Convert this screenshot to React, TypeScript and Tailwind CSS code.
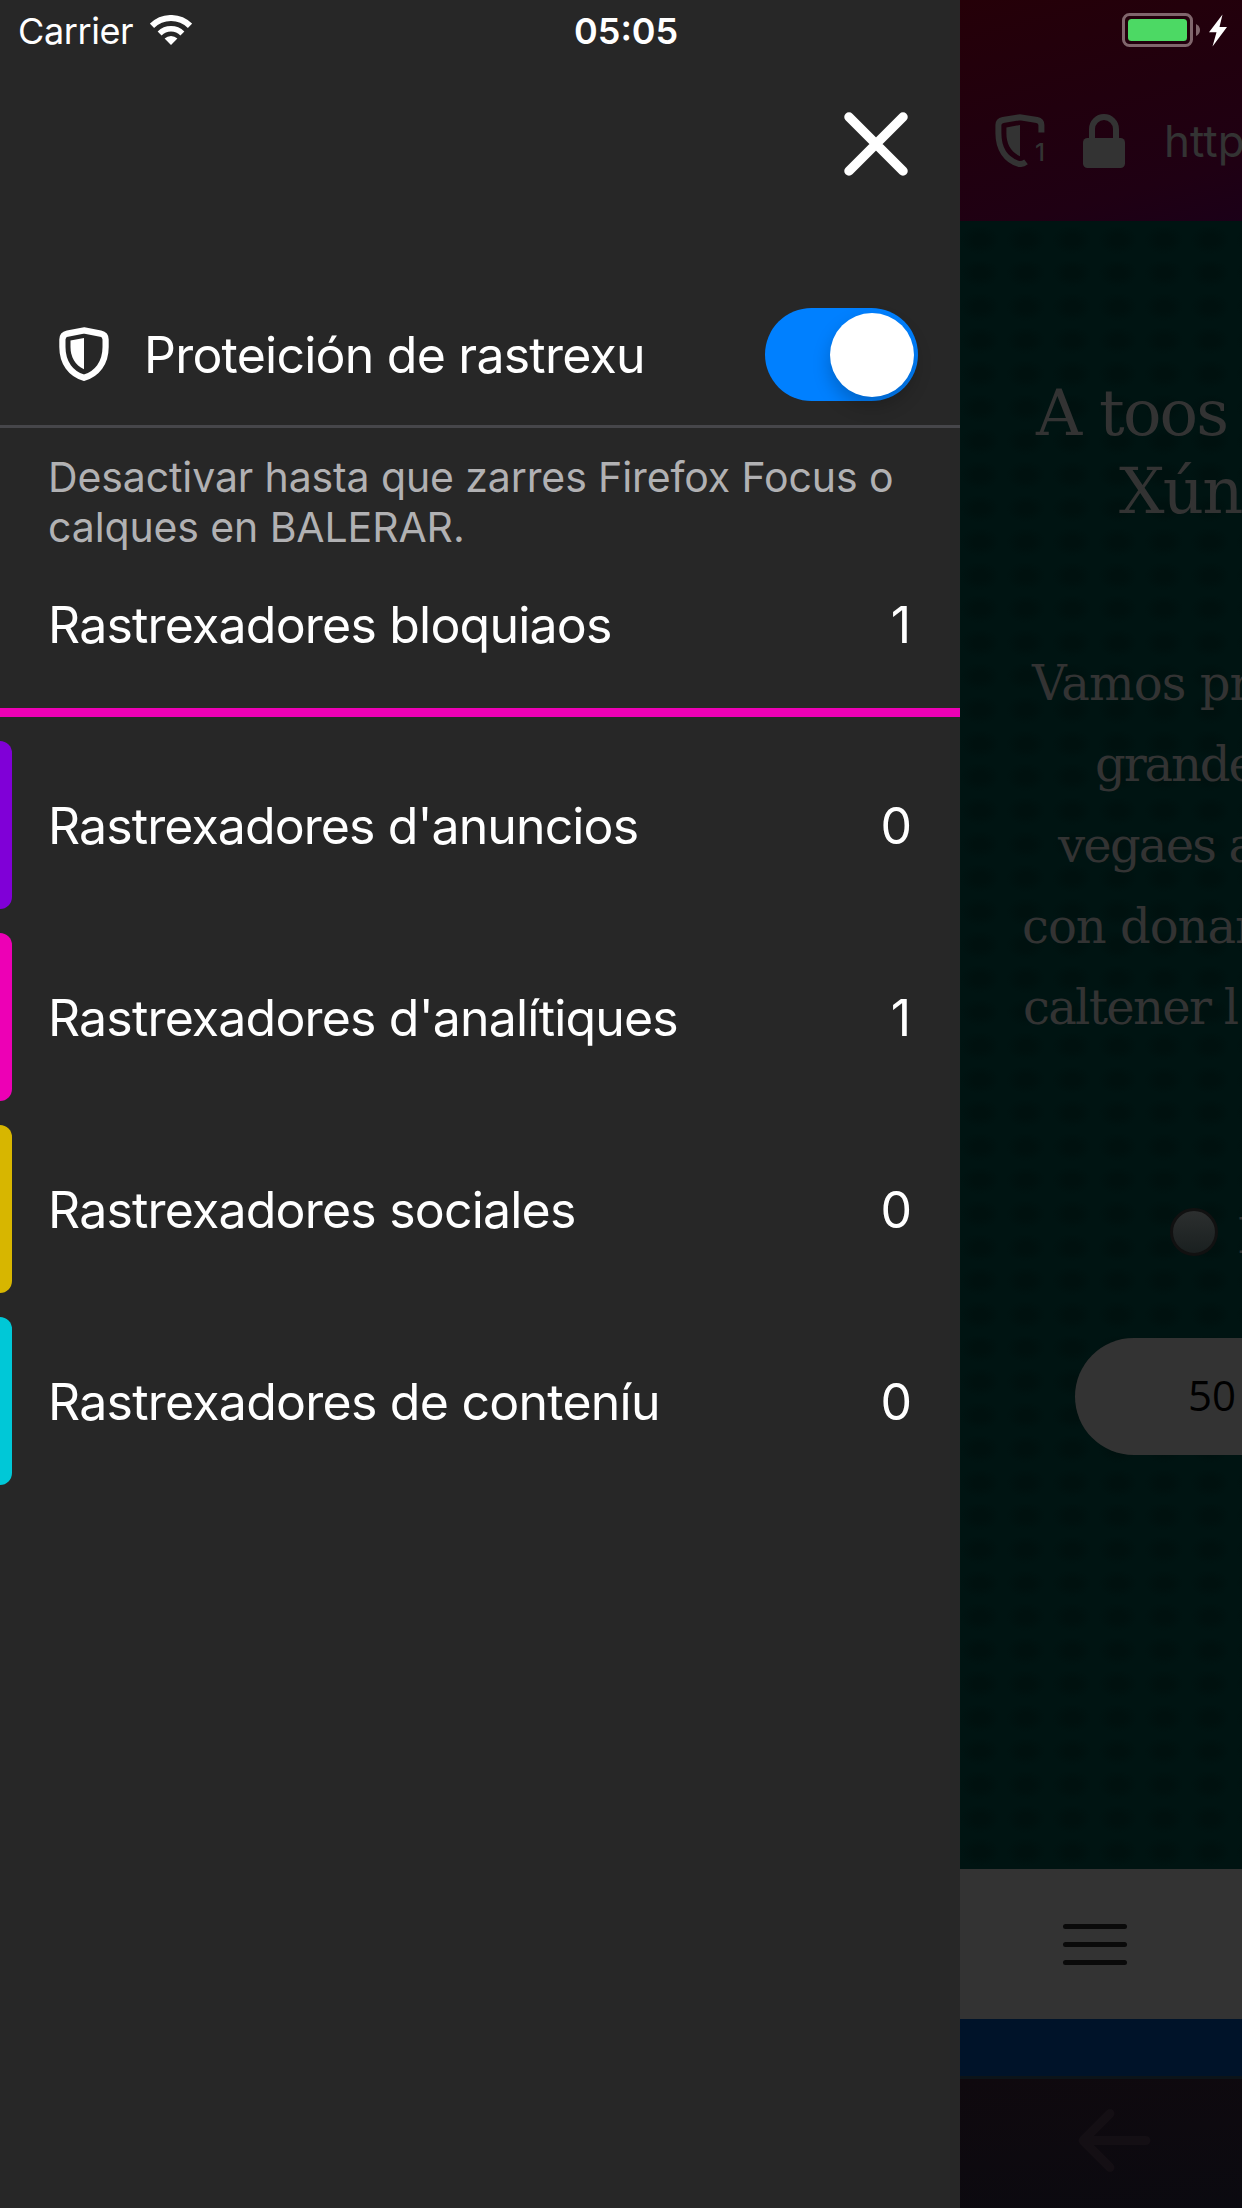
const trackers = [
  { label: "Rastrexadores d'anuncios", count: 0, bar: "bg-[#8000d7]", text: "tracking-[-0.9px]" },
  { label: "Rastrexadores d'analítiques", count: 1, bar: "bg-[#ed00b5]", text: "tracking-[-0.82px]" },
  { label: "Rastrexadores sociales", count: 0, bar: "bg-[#d7b600]", text: "tracking-[-0.8px]" },
  { label: "Rastrexadores de conteníu", count: 0, bar: "bg-[#00c8d7]", text: "tracking-[-0.75px]" },
];

function WifiIcon() {
  return (
    <svg width="42" height="30" viewBox="0 0 42 30" fill="none" stroke="#fff" className="block">
      <path d="M2 10.8 A27 27 0 0 1 40 10.8" strokeWidth="6" />
      <path d="M9.6 18.4 A16.3 16.3 0 0 1 32.4 18.4" strokeWidth="5.6" />
      <path d="M21 30 L14.6 23.6 A9.2 9.2 0 0 1 27.4 23.6 Z" fill="#fff" stroke="none" />
    </svg>
  );
}

function ShieldIcon() {
  return (
    <svg width="50" height="54" viewBox="0 0 50 54" className="block">
      <path
        d="M25 3.4 L41.5 6.6 Q46.6 7.8 46.6 12.5 V20 C46.6 36 38 47 25 50.8 C12 47 3.4 36 3.4 20 V12.5 Q3.4 7.8 8.5 6.6 Z"
        fill="none"
        stroke="#fff"
        strokeWidth="6.2"
      />
      <path d="M25 11 L11.5 13.6 V20 C11.5 30 16 38 25 42.3 Z" fill="#fff" />
    </svg>
  );
}

function ShieldCountIcon() {
  return (
    <div className="relative h-[53px] w-[50px] text-[#333]">
      <svg width="50" height="53" viewBox="0 0 50 53" className="block">
        <path
          d="M46.4 18.4 V11 Q46.4 7 42 6 L25 3.2 L8 6 Q3.4 7 3.4 11 V19 C3.4 35 11 46 24 50 Q27.6 50.4 31 47.8"
          fill="none"
          stroke="currentColor"
          strokeWidth="6"
        />
        <path d="M25 11 L11.4 13.4 V19 C11.4 30 15.6 37.8 25 42.2 Z" fill="currentColor" />
      </svg>
      <span className="absolute left-[40px] top-[25px] text-[24px] font-medium leading-[28px]">1</span>
    </div>
  );
}

function LockIcon() {
  return (
    <svg width="42" height="54" viewBox="0 0 42 54" className="block">
      <path d="M9 26 V15 A12 12 0 0 1 33 15 V26" fill="none" stroke="#333" strokeWidth="6" />
      <rect x="0" y="24" width="42" height="30" rx="4.5" fill="#333" />
    </svg>
  );
}

function Battery() {
  return (
    <svg width="106" height="34" viewBox="0 0 106 34" className="block">
      <rect x="1.5" y="1.5" width="68" height="31" rx="6" fill="none" stroke="#80666c" strokeWidth="3" />
      <rect x="6" y="6" width="59" height="22" rx="3.5" fill="#4cd964" />
      <path d="M74 11 Q78 13 78 17 Q78 21 74 23 Z" fill="#80666c" />
      <path d="M100.5 1.5 L87 19.2 H94.5 L90.5 33.5 L105 14 H97.5 Z" fill="#fff" />
    </svg>
  );
}

function Panel() {
  return (
    <aside className="flex h-full w-[960px] shrink-0 flex-col bg-[#272727] text-white">
      <div className="flex h-[62px] items-center pl-[18px] text-[36px] leading-[62px]">
        <span className="w-[132px] tracking-[-0.4px]">Carrier</span>
        <div className="-mt-0.5">
          <WifiIcon />
        </div>
        <span className="ml-[382px] font-semibold">05:05</span>
      </div>

      <div className="flex h-[222px] justify-end pr-[52px] pt-[50px]">
        <svg width="64" height="64" viewBox="0 0 64 64" className="block">
          <path d="M5 5 L59 59 M59 5 L5 59" stroke="#fff" strokeWidth="9.5" strokeLinecap="round" />
        </svg>
      </div>

      <div className="flex h-[144px] shrink-0 items-center border-b-[3px] border-[#46464a] pl-[59px] pr-[42px]">
        <div className="-mt-px">
          <ShieldIcon />
        </div>
        <span className="ml-[35px] flex-1 pt-[1px] text-[50px] leading-[60px] tracking-[-0.77px]">
          Proteición de rastrexu
        </span>
        <div className="flex h-[93px] w-[153px] items-center justify-end rounded-full bg-[#0080ff] pr-[4.5px]">
          <div className="size-[84px] rounded-full bg-white shadow-[0_9px_18px_rgba(0,0,0,0.22)]" />
        </div>
      </div>

      <p className="pl-[48px] pt-[24px] text-[41px] leading-[50px] tracking-[-0.11px] text-[#b1b1b3]">
        Desactivar hasta que zarres Firefox Focus o
        <br />
        calques en BALERAR.
      </p>

      <div className="flex h-[165px] items-center justify-between border-b-[9px] border-[#ed00b5] pb-[10px] pl-[48px] pr-[49px] text-[50px]">
        <span className="tracking-[-0.79px]">Rastrexadores bloquiaos</span>
        <span>1</span>
      </div>

      <div className="flex flex-col gap-6 pt-6">
        {trackers.map((t) => (
          <div key={t.label} className="flex h-[168px] items-center pr-[47px] text-[50px] leading-[60px]">
            <div className={`h-full w-3 rounded-r-[12px] ${t.bar}`} />
            <span className={`ml-9 flex-1 pt-[2px] ${t.text}`}>{t.label}</span>
            <span className={t.count === 1 ? "pr-[2px] pt-[2px]" : "pr-px pt-[2px]"}>{t.count}</span>
          </div>
        ))}
      </div>
    </aside>
  );
}

function Page() {
  return (
    <main className="flex h-full w-[282px] flex-col overflow-hidden whitespace-nowrap">
      <header className="flex h-[221px] shrink-0 flex-col bg-linear-[165deg,#250008_0%,#21000e_45%,#1f0013_80%,#1b0018_100%]">
        <div className="pl-[162px] pt-[13px]">
          <Battery />
        </div>
        <div className="mt-[14px] flex h-[159px] items-center pl-[35px]">
          <div className="-mt-px">
            <ShieldCountIcon />
          </div>
          <div className="ml-[38px]">
            <LockIcon />
          </div>
          <span className="ml-[39px] text-[44px] text-[#333]">https://</span>
        </div>
      </header>

      <section className="h-[1648px] shrink-0 bg-[#001412] bg-[radial-gradient(ellipse_at_center,#00110f_0%,#00110f_20%,#001412_60%)] bg-[length:46px_33.6px] bg-[position:-3px_2px] pt-[153px] font-['DejaVu_Serif',serif] text-[#333]">
        <h1 className="text-[64px] leading-[78px] tracking-[-1.8px]">
          <div className="pl-[76px]">A toos</div>
          <div className="pl-[159px]">Xúntate</div>
        </h1>
        <div className="mt-[113px] text-[48px] leading-[81px]">
          <div className="pl-[72px] tracking-[-0.9px]">Vamos pr</div>
          <div className="pl-[135px] tracking-[-2.1px]">grandes</div>
          <div className="pl-[98px] tracking-[-1.8px]">vegaes a</div>
          <div className="pl-[62px] tracking-[-1px]">con donar</div>
          <div className="pl-[63px] tracking-[-1.7px]">caltener l</div>
        </div>
        <div className="mt-[160px] flex h-12 items-center pl-[210px]">
          <div className="size-12 shrink-0 rounded-full border-[3px] border-[#111] bg-linear-to-b from-[#2c2f2f] to-[#1a2020]" />
          <span className="ml-[19px] pt-[8px] text-[48px] leading-[48px]">Mensual</span>
        </div>
        <div className="ml-[115px] mt-[82px] flex h-[117px] w-[500px] items-center rounded-full bg-[#333] pb-[4px] pl-[113px] font-['Open_Sans',sans-serif] text-[42px] leading-[60px] text-black">
          50
        </div>
      </section>

      <div className="flex h-[150px] shrink-0 flex-col gap-[13px] bg-[#333] pl-[103px] pt-[55px]">
        <div className="h-[5px] w-16 rounded-full bg-[#0a0a0a]" />
        <div className="h-[5px] w-16 rounded-full bg-[#0a0a0a]" />
        <div className="h-[5px] w-16 rounded-full bg-[#0a0a0a]" />
      </div>
      <div className="h-[57px] shrink-0 bg-[#001329]" />
      <footer className="flex-1 border-t-[3px] border-[#0c1419] bg-linear-[170deg,#0f090e_0%,#0b0a10_100%] pl-[118px] pt-[29px]">
        <svg width="73" height="66" viewBox="0 0 73 66" className="block">
          <path
            d="M32 5.5 L5 32.5 L32 59.5 M5 32.5 H68"
            fill="none"
            stroke="#140f14"
            strokeWidth="9"
            strokeLinecap="round"
            strokeLinejoin="round"
          />
        </svg>
      </footer>
    </main>
  );
}

export default function App() {
  return (
    <div className="flex h-[2208px] w-[1242px] overflow-hidden bg-black font-['Inter',sans-serif]">
      <Panel />
      <Page />
    </div>
  );
}
